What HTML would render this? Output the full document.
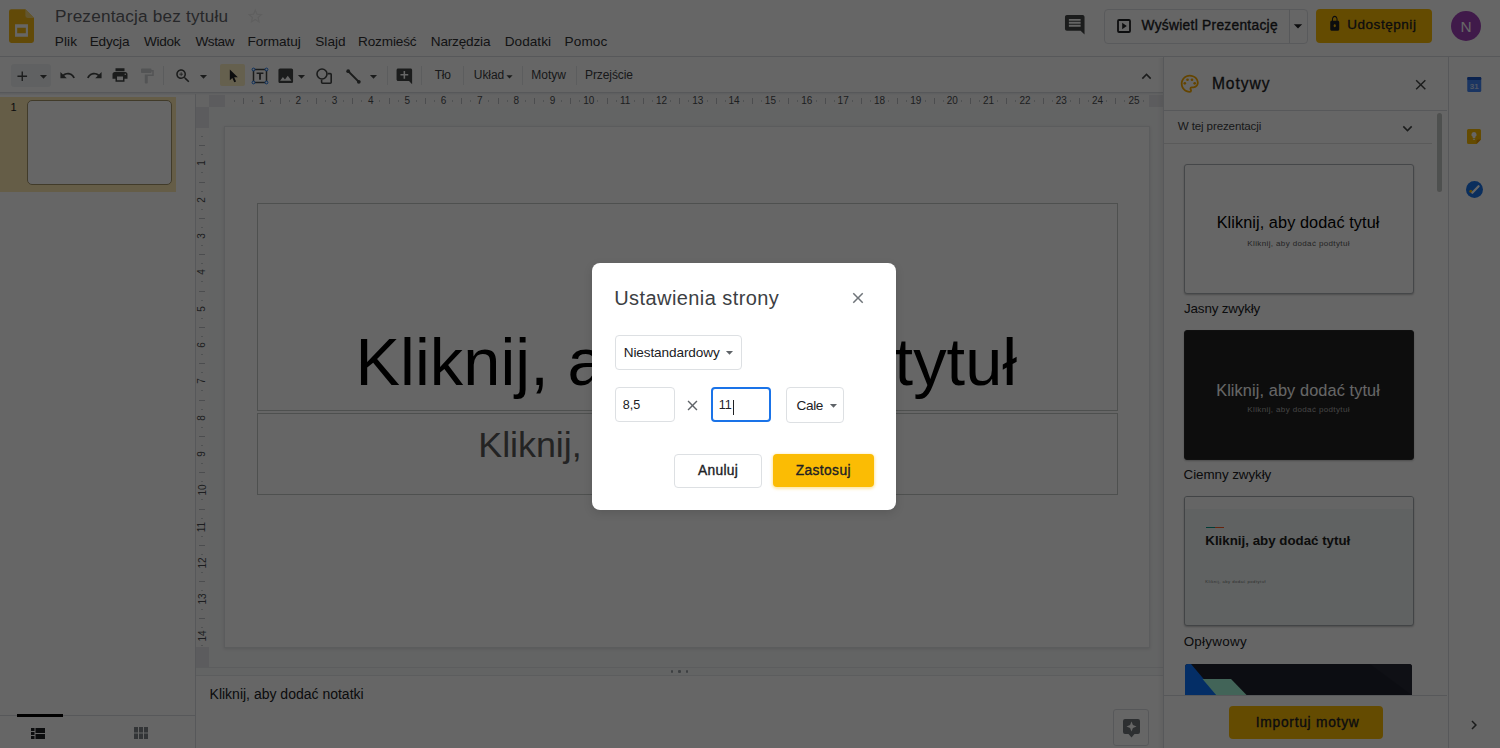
<!DOCTYPE html>
<html lang="pl"><head><meta charset="utf-8"><title>Prezentacja bez tytułu</title>
<style>
html,body{margin:0;padding:0;}
body{width:1500px;height:748px;overflow:hidden;position:relative;background:#fff;font-family:"Liberation Sans",sans-serif;}
.a{position:absolute;box-sizing:content-box;}
.t{position:absolute;white-space:nowrap;}
#page{position:absolute;left:0;top:0;width:1500px;height:748px;overflow:hidden;background:#fff;}
#dim{position:absolute;left:0;top:0;width:1500px;height:748px;background:rgba(0,0,0,.6);}
</style></head><body>
<div id="page"><svg class="a" style="left:9.300px;top:9px" width="25" height="34.200" viewBox="0 0 26 35"><path d="M2.4 0H17l9 9v23.6A2.4 2.4 0 0 1 23.600 35H2.4A2.400 2.400 0 0 1 0 32.600V2.400A2.400 2.400 0 0 1 2.400 0z" fill="#f5ba15"/><path d="M17 0l9 9h-6.600A2.400 2.400 0 0 1 17 6.600z" fill="#f8d775"/><path d="M6.300 15.500h13.400v13.200h-13.400zM8.500 19.300v5.600h9v-5.600z" fill="#fff" fill-rule="evenodd"/></svg><span class="t " style="left:55.09px;top:8px;font-size:17.2px;line-height:17.2px;color:#5f6368;letter-spacing:0.182px;">Prezentacja bez tytułu</span><svg class="a" style="left:246.25px;top:6.75px;" width="18.5" height="18.5" viewBox="0 0 24 24" fill="#ededed"><path d="M22 9.24l-7.19-.62L12 2 9.19 8.63 2 9.24l5.46 4.73L5.82 21 12 17.27 18.18 21l-1.63-7.03L22 9.24zM12 15.4l-3.76 2.27 1-4.28-3.32-2.88 4.38-.38L12 6.1l1.71 4.04 4.38.38-3.32 2.88 1 4.28L12 15.4z"/></svg><span class="t " style="left:54.68px;top:35px;font-size:13.6px;line-height:13.6px;color:#303134;letter-spacing:0.160px;">Plik</span><span class="t " style="left:89.78px;top:35px;font-size:13.6px;line-height:13.6px;color:#303134;letter-spacing:-0.221px;">Edycja</span><span class="t " style="left:144.04px;top:35px;font-size:13.6px;line-height:13.6px;color:#303134;letter-spacing:-0.336px;">Widok</span><span class="t " style="left:195.44px;top:35px;font-size:13.6px;line-height:13.6px;color:#303134;letter-spacing:-0.443px;">Wstaw</span><span class="t " style="left:247.58px;top:35px;font-size:13.6px;line-height:13.6px;color:#303134;letter-spacing:-0.061px;">Formatuj</span><span class="t " style="left:315.28px;top:35px;font-size:13.6px;line-height:13.6px;color:#303134;letter-spacing:0.013px;">Slajd</span><span class="t " style="left:357.98px;top:35px;font-size:13.6px;line-height:13.6px;color:#303134;letter-spacing:-0.147px;">Rozmieść</span><span class="t " style="left:430.78px;top:35px;font-size:13.6px;line-height:13.6px;color:#303134;letter-spacing:-0.189px;">Narzędzia</span><span class="t " style="left:504.78px;top:35px;font-size:13.6px;line-height:13.6px;color:#303134;letter-spacing:0.020px;">Dodatki</span><span class="t " style="left:564.58px;top:35px;font-size:13.6px;line-height:13.6px;color:#303134;letter-spacing:0.086px;">Pomoc</span><svg class="a" style="left:1062.95px;top:13.45px;" width="23.5" height="23.5" viewBox="0 0 24 24" fill="#444746"><path d="M21.99 4c0-1.1-.89-2-1.99-2H4c-1.1 0-2 .9-2 2v12c0 1.1.9 2 2 2h14l4 4-.01-18zM18 14H6v-2h12v2zm0-3H6V9h12v2zm0-3H6V6h12v2z"/></svg><div class="a" style="left:1104px;top:9px;width:202px;height:32.5px;border:1px solid #dfe1e5;border-radius:4px;"></div><div class="a" style="left:1288.5px;top:9px;width:1px;height:34px;background:#dadce0;"></div><svg class="a" style="left:1116.500px;top:18.500px" width="14" height="14" viewBox="0 0 14 14"><rect x="1" y="1" width="12" height="12" rx="1" fill="none" stroke="#202124" stroke-width="1.800"/><path d="M5.200 3.800v6.400l4.600-3.200z" fill="#202124"/></svg><span class="t " style="left:1141.54px;top:19px;font-size:13.8px;line-height:13.8px;color:#202124;letter-spacing:0.266px;-webkit-text-stroke:.35px #202124;">Wyświetl Prezentację</span><svg class="a" style="left:1287.60px;top:15.50px;" width="20" height="20" viewBox="0 0 24 24" fill="#202124"><path d="M7 10l5 5 5-5z"/></svg><div class="a" style="left:1315.5px;top:9px;width:116.5px;height:34px;background:#fbbc04;border-radius:4px;"></div><svg class="a" style="left:1327.500px;top:15px" width="13.500" height="17.200" viewBox="0 0 24 24" preserveAspectRatio="none" fill="#202124"><path d="M18 8h-1V6c0-2.76-2.24-5-5-5S7 3.24 7 6v2H6c-1.1 0-2 .9-2 2v10c0 1.1.9 2 2 2h12c1.1 0 2-.9 2-2V10c0-1.1-.9-2-2-2zm-6 9c-1.1 0-2-.9-2-2s.9-2 2-2 2 .9 2 2-.9 2-2 2zm3.1-9H8.9V6c0-1.71 1.39-3.1 3.1-3.1 1.71 0 3.1 1.39 3.1 3.1v2z"/></svg><span class="t " style="left:1347.16px;top:18px;font-size:13.5px;line-height:13.5px;color:#202124;letter-spacing:0.551px;-webkit-text-stroke:.3px #202124;">Udostępnij</span><div class="a" style="left:1451px;top:10.7px;width:30px;height:30px;background:#a142b8;border-radius:50%;"></div><span class="t " style="left:1460.44px;top:19px;font-size:15.4px;line-height:15.4px;color:#fff;">N</span><div class="a" style="left:0px;top:56px;width:1500px;height:1px;background:#dadce0;"></div><div class="a" style="left:11px;top:63.5px;width:39.5px;height:23px;background:#f1f3f4;border-radius:3px;"></div><svg class="a" style="left:14.45px;top:67.65px;" width="16.5" height="16.5" viewBox="0 0 24 24" fill="#444746"><path d="M19 13h-6v6h-2v-6H5v-2h6V5h2v6h6v2z"/></svg><svg class="a" style="left:35.10px;top:67.50px;" width="17" height="17" viewBox="0 0 24 24" fill="#444746"><path d="M7 10l5 5 5-5z"/></svg><svg class="a" style="left:58.50px;top:67.00px;" width="17" height="17" viewBox="0 0 24 24" fill="#444746"><path d="M12.5 8c-2.65 0-5.05.99-6.9 2.6L2 7v9h9l-3.62-3.62c1.39-1.16 3.16-1.88 5.12-1.88 3.54 0 6.55 2.31 7.6 5.5l2.37-.78C21.08 11.03 17.15 8 12.5 8z"/></svg><svg class="a" style="left:85.50px;top:67.00px;" width="17" height="17" viewBox="0 0 24 24" fill="#444746"><path d="M18.4 10.6C16.55 8.99 14.15 8 11.5 8c-4.65 0-8.58 3.03-9.96 7.22L3.9 16c1.05-3.19 4.05-5.5 7.6-5.5 1.95 0 3.73.72 5.12 1.88L13 16h9V7l-3.6 3.6z"/></svg><svg class="a" style="left:111.10px;top:66.30px;" width="18" height="18" viewBox="0 0 24 24" fill="#444746"><path d="M19 8H5c-1.66 0-3 1.34-3 3v6h4v4h12v-4h4v-6c0-1.66-1.34-3-3-3zm-3 11H8v-5h8v5zm3-7c-.55 0-1-.45-1-1s.45-1 1-1 1 .45 1 1-.45 1-1 1zm-1-9H6v4h12V3z"/></svg><svg class="a" style="left:138.00px;top:66.50px;" width="18" height="18" viewBox="0 0 24 24" fill="#cfd1d4"><path d="M18 4V3c0-.55-.45-1-1-1H5c-.55 0-1 .45-1 1v4c0 .55.45 1 1 1h12c.55 0 1-.45 1-1V6h1v4H9v11c0 .55.45 1 1 1h2c.55 0 1-.45 1-1v-9h8V4h-3z"/></svg><div class="a" style="left:163px;top:66px;width:1px;height:19px;background:#e4e6e9;"></div><svg class="a" style="left:173.50px;top:67.30px;" width="18" height="18" viewBox="0 0 24 24" fill="#444746"><path d="M15.5 14h-.79l-.28-.27C15.41 12.59 16 11.11 16 9.5 16 5.91 13.09 3 9.5 3S3 5.91 3 9.5 5.91 16 9.5 16c1.61 0 3.09-.59 4.23-1.57l.27.28v.79l5 4.99L20.49 19l-4.99-5zm-6 0C7.01 14 5 11.99 5 9.5S7.01 5 9.5 5 14 7.01 14 9.5 11.99 14 9.5 14zM12 10h-2v2H9v-2H7V9h2V7h1v2h2v1z"/></svg><svg class="a" style="left:195.00px;top:67.50px;" width="17" height="17" viewBox="0 0 24 24" fill="#444746"><path d="M7 10l5 5 5-5z"/></svg><div class="a" style="left:220px;top:63.5px;width:25px;height:22.5px;background:#fdefc3;border-radius:2px;"></div><svg class="a" style="left:228.5px;top:68.800px" width="9.900" height="14" viewBox="0 0 12 17"><path d="M1 0.500v13.300l3.100-3 2.300 5.400 2.200-.9-2.300-5.300h4.400z" fill="#202124"/></svg><svg class="a" style="left:251px;top:67px" width="18" height="18" viewBox="0 0 18 18"><path d="M2.500 2.500h13v13h-13z" fill="none" stroke="#444746" stroke-width="1.500"/><path d="M5.600 5.400h6.800v1.700h-2.500v5.700h-1.800v-5.700h-2.500z" fill="#444746"/><g fill="#fff" stroke="#1a73e8" stroke-width="1"><circle cx="2.500" cy="2.500" r="1.400"/><circle cx="15.500" cy="2.500" r="1.400"/><circle cx="2.500" cy="15.500" r="1.400"/><circle cx="15.500" cy="15.500" r="1.400"/></g></svg><svg class="a" style="left:275.85px;top:65.75px;" width="19.5" height="19.5" viewBox="0 0 24 24" fill="#444746"><path d="M21 19V5c0-1.1-.9-2-2-2H5c-1.1 0-2 .9-2 2v14c0 1.1.9 2 2 2h14c1.1 0 2-.9 2-2zM8.5 13.5l2.5 3.01L14.5 12l4.5 6H5l3.5-4.5z"/></svg><svg class="a" style="left:292.90px;top:67.50px;" width="17" height="17" viewBox="0 0 24 24" fill="#444746"><path d="M7 10l5 5 5-5z"/></svg><svg class="a" style="left:315.5px;top:67.500px" width="16" height="16" viewBox="0 0 16 16" fill="none" stroke="#444746" stroke-width="1.600"><circle cx="6" cy="6" r="5"/><path d="M11.800 5.600h2.400a1 1 0 0 1 1 1v7.600a1 1 0 0 1 -1 1h-7.600a1 1 0 0 1 -1 -1v-2.400"/></svg><svg class="a" style="left:345.5px;top:68.500px" width="15" height="15" viewBox="0 0 15 15"><path d="M2 2L13 13" stroke="#444746" stroke-width="1.800"/><circle cx="2.200" cy="2.200" r="1.900" fill="#444746"/><circle cx="12.800" cy="12.800" r="1.900" fill="#444746"/></svg><svg class="a" style="left:364.70px;top:67.50px;" width="17" height="17" viewBox="0 0 24 24" fill="#444746"><path d="M7 10l5 5 5-5z"/></svg><div class="a" style="left:386.5px;top:66px;width:1px;height:19px;background:#e6e8eb;"></div><svg class="a" style="left:394.95px;top:66.65px;" width="18.7" height="18.7" viewBox="0 0 24 24" fill="#444746"><path d="M21.99 4c0-1.1-.89-2-1.99-2H4c-1.1 0-2 .9-2 2v12c0 1.1.9 2 2 2h14l4 4-.01-18zM17 11h-4v4h-2v-4H7V9h4V5h2v4h4v2z"/></svg><div class="a" style="left:421px;top:66px;width:1px;height:19px;background:#e6e8eb;"></div><span class="t " style="left:434.63px;top:69px;font-size:12px;line-height:12px;color:#3c4043;letter-spacing:-0.149px;">Tło</span><div class="a" style="left:463px;top:66px;width:1px;height:19px;background:#e6e8eb;"></div><span class="t " style="left:473.77px;top:69px;font-size:12px;line-height:12px;color:#3c4043;letter-spacing:-0.045px;">Układ</span><svg class="a" style="left:501.80px;top:68.50px;" width="15" height="15" viewBox="0 0 24 24" fill="#444746"><path d="M7 10l5 5 5-5z"/></svg><div class="a" style="left:522px;top:66px;width:1px;height:19px;background:#e6e8eb;"></div><span class="t " style="left:531.32px;top:69px;font-size:12px;line-height:12px;color:#3c4043;letter-spacing:-0.029px;">Motyw</span><div class="a" style="left:576px;top:66px;width:1px;height:19px;background:#e6e8eb;"></div><span class="t " style="left:585.02px;top:69px;font-size:12px;line-height:12px;color:#3c4043;letter-spacing:-0.095px;">Przejście</span><svg class="a" style="left:1137.20px;top:66.50px;" width="19" height="19" viewBox="0 0 24 24" fill="#444746"><path d="M12 8l-6 6 1.41 1.41L12 10.83l4.59 4.58L18 14z"/></svg><div class="a" style="left:0px;top:91.5px;width:1163px;height:1px;background:#dadce0;"></div><div class="a" style="left:0px;top:92.5px;width:1163px;height:2px;background:linear-gradient(#e8eaed,#f8f9fa);"></div><div class="a" style="left:0px;top:94.5px;width:195px;height:620px;background:#fff;"></div><div class="a" style="left:0px;top:96.5px;width:176px;height:95px;background:#fce8b2;"></div><span class="t " style="left:10.39px;top:102px;font-size:11px;line-height:11px;color:#202124;">1</span><div class="a" style="left:27.2px;top:100.2px;width:142.6px;height:82.6px;border:1.500px solid #a3946a;border-radius:5px;background:#fff;"></div><div class="a" style="left:195px;top:94px;width:1px;height:654px;background:#dadce0;"></div><div class="a" style="left:0px;top:714.5px;width:195px;height:1px;background:#dadce0;"></div><div class="a" style="left:16.5px;top:714px;width:46px;height:2.5px;background:#000;"></div><svg class="a" style="left:31px;top:727.500px" width="14" height="11" viewBox="0 0 14 11" fill="#202124"><path d="M0 0h3.500v3h-3.500zM0 4h3.500v3h-3.500zM0 8h3.500v3h-3.500zM4.500 0h9.500v5h-9.500zM4.500 6h9.500v5h-9.500z"/></svg><svg class="a" style="left:134px;top:727px" width="14" height="12" viewBox="0 0 14 12" fill="#80868b"><path d="M0 0h4v5.500h-4zM5 0h4v5.500h-4zM10 0h4v5.500h-4zM0 6.500h4v5.500h-4zM5 6.500h4v5.500h-4zM10 6.500h4v5.500h-4z"/></svg><div class="a" style="left:196px;top:94.5px;width:967px;height:572.5px;background:#f8f9fa;"></div><div class="a" style="left:196px;top:94.5px;width:967px;height:12px;background:#fbfbfb;"></div><div class="a" style="left:196px;top:94.5px;width:12.5px;height:572.5px;background:#fbfbfb;"></div><div class="a" style="left:208.5px;top:94.5px;width:16.5px;height:12px;background:#e6e6ea;"></div><div class="a" style="left:1148.5px;top:94.5px;width:14.5px;height:12px;background:#e6e6ea;"></div><div class="a" style="left:196px;top:106.5px;width:12.5px;height:21px;background:#e6e6ea;"></div><div class="a" style="left:196px;top:647px;width:12.5px;height:20px;background:#e6e6ea;"></div><span class="t " style="left:258.92px;top:96px;font-size:10px;line-height:10px;color:#4a4d50;">1</span><span class="t " style="left:295.40px;top:96px;font-size:10px;line-height:10px;color:#4a4d50;">2</span><span class="t " style="left:331.77px;top:96px;font-size:10px;line-height:10px;color:#4a4d50;">3</span><span class="t " style="left:368.11px;top:96px;font-size:10px;line-height:10px;color:#4a4d50;">4</span><span class="t " style="left:404.43px;top:96px;font-size:10px;line-height:10px;color:#4a4d50;">5</span><span class="t " style="left:440.72px;top:96px;font-size:10px;line-height:10px;color:#4a4d50;">6</span><span class="t " style="left:477.09px;top:96px;font-size:10px;line-height:10px;color:#4a4d50;">7</span><span class="t " style="left:513.44px;top:96px;font-size:10px;line-height:10px;color:#4a4d50;">8</span><span class="t " style="left:549.78px;top:96px;font-size:10px;line-height:10px;color:#4a4d50;">9</span><span class="t " style="left:583.15px;top:96px;font-size:10px;line-height:10px;color:#4a4d50;">10</span><span class="t " style="left:619.91px;top:96px;font-size:10px;line-height:10px;color:#4a4d50;">11</span><span class="t " style="left:655.89px;top:96px;font-size:10px;line-height:10px;color:#4a4d50;">12</span><span class="t " style="left:692.20px;top:96px;font-size:10px;line-height:10px;color:#4a4d50;">13</span><span class="t " style="left:728.46px;top:96px;font-size:10px;line-height:10px;color:#4a4d50;">14</span><span class="t " style="left:764.87px;top:96px;font-size:10px;line-height:10px;color:#4a4d50;">15</span><span class="t " style="left:801.22px;top:96px;font-size:10px;line-height:10px;color:#4a4d50;">16</span><span class="t " style="left:837.59px;top:96px;font-size:10px;line-height:10px;color:#4a4d50;">17</span><span class="t " style="left:873.89px;top:96px;font-size:10px;line-height:10px;color:#4a4d50;">18</span><span class="t " style="left:910.25px;top:96px;font-size:10px;line-height:10px;color:#4a4d50;">19</span><span class="t " style="left:946.68px;top:96px;font-size:10px;line-height:10px;color:#4a4d50;">20</span><span class="t " style="left:983.07px;top:96px;font-size:10px;line-height:10px;color:#4a4d50;">21</span><span class="t " style="left:1019.42px;top:96px;font-size:10px;line-height:10px;color:#4a4d50;">22</span><span class="t " style="left:1055.73px;top:96px;font-size:10px;line-height:10px;color:#4a4d50;">23</span><span class="t " style="left:1091.99px;top:96px;font-size:10px;line-height:10px;color:#4a4d50;">24</span><span class="t " style="left:1128.40px;top:96px;font-size:10px;line-height:10px;color:#4a4d50;">25</span><div class="a" style="left:242.5px;top:97.5px;width:1px;height:6px;background:#bdc1c6;"></div><div class="a" style="left:233.5px;top:99.5px;width:1px;height:2px;background:#c8ccd0;"></div><div class="a" style="left:251.5px;top:99.5px;width:1px;height:2px;background:#c8ccd0;"></div><div class="a" style="left:279.5px;top:97.5px;width:1px;height:6px;background:#bdc1c6;"></div><div class="a" style="left:269.5px;top:99.5px;width:1px;height:2px;background:#c8ccd0;"></div><div class="a" style="left:288.5px;top:99.5px;width:1px;height:2px;background:#c8ccd0;"></div><div class="a" style="left:315.5px;top:97.5px;width:1px;height:6px;background:#bdc1c6;"></div><div class="a" style="left:306.5px;top:99.5px;width:1px;height:2px;background:#c8ccd0;"></div><div class="a" style="left:324.5px;top:99.5px;width:1px;height:2px;background:#c8ccd0;"></div><div class="a" style="left:351.5px;top:97.5px;width:1px;height:6px;background:#bdc1c6;"></div><div class="a" style="left:342.5px;top:99.5px;width:1px;height:2px;background:#c8ccd0;"></div><div class="a" style="left:360.5px;top:99.5px;width:1px;height:2px;background:#c8ccd0;"></div><div class="a" style="left:388.5px;top:97.5px;width:1px;height:6px;background:#bdc1c6;"></div><div class="a" style="left:378.5px;top:99.5px;width:1px;height:2px;background:#c8ccd0;"></div><div class="a" style="left:397.5px;top:99.5px;width:1px;height:2px;background:#c8ccd0;"></div><div class="a" style="left:424.5px;top:97.5px;width:1px;height:6px;background:#bdc1c6;"></div><div class="a" style="left:415.5px;top:99.5px;width:1px;height:2px;background:#c8ccd0;"></div><div class="a" style="left:433.5px;top:99.5px;width:1px;height:2px;background:#c8ccd0;"></div><div class="a" style="left:460.5px;top:97.5px;width:1px;height:6px;background:#bdc1c6;"></div><div class="a" style="left:451.5px;top:99.5px;width:1px;height:2px;background:#c8ccd0;"></div><div class="a" style="left:469.5px;top:99.5px;width:1px;height:2px;background:#c8ccd0;"></div><div class="a" style="left:497.5px;top:97.5px;width:1px;height:6px;background:#bdc1c6;"></div><div class="a" style="left:487.5px;top:99.5px;width:1px;height:2px;background:#c8ccd0;"></div><div class="a" style="left:506.5px;top:99.5px;width:1px;height:2px;background:#c8ccd0;"></div><div class="a" style="left:533.5px;top:97.5px;width:1px;height:6px;background:#bdc1c6;"></div><div class="a" style="left:524.5px;top:99.5px;width:1px;height:2px;background:#c8ccd0;"></div><div class="a" style="left:542.5px;top:99.5px;width:1px;height:2px;background:#c8ccd0;"></div><div class="a" style="left:569.5px;top:97.5px;width:1px;height:6px;background:#bdc1c6;"></div><div class="a" style="left:560.5px;top:99.5px;width:1px;height:2px;background:#c8ccd0;"></div><div class="a" style="left:578.5px;top:99.5px;width:1px;height:2px;background:#c8ccd0;"></div><div class="a" style="left:606.5px;top:97.5px;width:1px;height:6px;background:#bdc1c6;"></div><div class="a" style="left:596.5px;top:99.5px;width:1px;height:2px;background:#c8ccd0;"></div><div class="a" style="left:615.5px;top:99.5px;width:1px;height:2px;background:#c8ccd0;"></div><div class="a" style="left:642.5px;top:97.5px;width:1px;height:6px;background:#bdc1c6;"></div><div class="a" style="left:633.5px;top:99.5px;width:1px;height:2px;background:#c8ccd0;"></div><div class="a" style="left:651.5px;top:99.5px;width:1px;height:2px;background:#c8ccd0;"></div><div class="a" style="left:678.5px;top:97.5px;width:1px;height:6px;background:#bdc1c6;"></div><div class="a" style="left:669.5px;top:99.5px;width:1px;height:2px;background:#c8ccd0;"></div><div class="a" style="left:687.5px;top:99.5px;width:1px;height:2px;background:#c8ccd0;"></div><div class="a" style="left:715.5px;top:97.5px;width:1px;height:6px;background:#bdc1c6;"></div><div class="a" style="left:706.5px;top:99.5px;width:1px;height:2px;background:#c8ccd0;"></div><div class="a" style="left:724.5px;top:99.5px;width:1px;height:2px;background:#c8ccd0;"></div><div class="a" style="left:751.5px;top:97.5px;width:1px;height:6px;background:#bdc1c6;"></div><div class="a" style="left:742.5px;top:99.5px;width:1px;height:2px;background:#c8ccd0;"></div><div class="a" style="left:760.5px;top:99.5px;width:1px;height:2px;background:#c8ccd0;"></div><div class="a" style="left:787.5px;top:97.5px;width:1px;height:6px;background:#bdc1c6;"></div><div class="a" style="left:778.5px;top:99.5px;width:1px;height:2px;background:#c8ccd0;"></div><div class="a" style="left:796.5px;top:99.5px;width:1px;height:2px;background:#c8ccd0;"></div><div class="a" style="left:824.5px;top:97.5px;width:1px;height:6px;background:#bdc1c6;"></div><div class="a" style="left:815.5px;top:99.5px;width:1px;height:2px;background:#c8ccd0;"></div><div class="a" style="left:833.5px;top:99.5px;width:1px;height:2px;background:#c8ccd0;"></div><div class="a" style="left:860.5px;top:97.5px;width:1px;height:6px;background:#bdc1c6;"></div><div class="a" style="left:851.5px;top:99.5px;width:1px;height:2px;background:#c8ccd0;"></div><div class="a" style="left:869.5px;top:99.5px;width:1px;height:2px;background:#c8ccd0;"></div><div class="a" style="left:896.5px;top:97.5px;width:1px;height:6px;background:#bdc1c6;"></div><div class="a" style="left:887.5px;top:99.5px;width:1px;height:2px;background:#c8ccd0;"></div><div class="a" style="left:905.5px;top:99.5px;width:1px;height:2px;background:#c8ccd0;"></div><div class="a" style="left:933.5px;top:97.5px;width:1px;height:6px;background:#bdc1c6;"></div><div class="a" style="left:924.5px;top:99.5px;width:1px;height:2px;background:#c8ccd0;"></div><div class="a" style="left:942.5px;top:99.5px;width:1px;height:2px;background:#c8ccd0;"></div><div class="a" style="left:969.5px;top:97.5px;width:1px;height:6px;background:#bdc1c6;"></div><div class="a" style="left:960.5px;top:99.5px;width:1px;height:2px;background:#c8ccd0;"></div><div class="a" style="left:978.5px;top:99.5px;width:1px;height:2px;background:#c8ccd0;"></div><div class="a" style="left:1005.5px;top:97.5px;width:1px;height:6px;background:#bdc1c6;"></div><div class="a" style="left:996.5px;top:99.5px;width:1px;height:2px;background:#c8ccd0;"></div><div class="a" style="left:1014.5px;top:99.5px;width:1px;height:2px;background:#c8ccd0;"></div><div class="a" style="left:1042.5px;top:97.5px;width:1px;height:6px;background:#bdc1c6;"></div><div class="a" style="left:1033.5px;top:99.5px;width:1px;height:2px;background:#c8ccd0;"></div><div class="a" style="left:1051.5px;top:99.5px;width:1px;height:2px;background:#c8ccd0;"></div><div class="a" style="left:1078.5px;top:97.5px;width:1px;height:6px;background:#bdc1c6;"></div><div class="a" style="left:1069.5px;top:99.5px;width:1px;height:2px;background:#c8ccd0;"></div><div class="a" style="left:1087.5px;top:99.5px;width:1px;height:2px;background:#c8ccd0;"></div><div class="a" style="left:1114.5px;top:97.5px;width:1px;height:6px;background:#bdc1c6;"></div><div class="a" style="left:1105.5px;top:99.5px;width:1px;height:2px;background:#c8ccd0;"></div><div class="a" style="left:1123.5px;top:99.5px;width:1px;height:2px;background:#c8ccd0;"></div><div class="a" style="left:1142.5px;top:99.5px;width:1px;height:2px;background:#c8ccd0;"></div><span class="t" style="left:199.42px;top:158.34px;font-size:10px;line-height:10px;color:#4a4d50;transform:rotate(-90deg);transform-origin:50% 50%;">1</span><span class="t" style="left:199.42px;top:194.68px;font-size:10px;line-height:10px;color:#4a4d50;transform:rotate(-90deg);transform-origin:50% 50%;">2</span><span class="t" style="left:199.42px;top:231.02px;font-size:10px;line-height:10px;color:#4a4d50;transform:rotate(-90deg);transform-origin:50% 50%;">3</span><span class="t" style="left:199.42px;top:267.36px;font-size:10px;line-height:10px;color:#4a4d50;transform:rotate(-90deg);transform-origin:50% 50%;">4</span><span class="t" style="left:199.42px;top:303.70px;font-size:10px;line-height:10px;color:#4a4d50;transform:rotate(-90deg);transform-origin:50% 50%;">5</span><span class="t" style="left:199.42px;top:340.04px;font-size:10px;line-height:10px;color:#4a4d50;transform:rotate(-90deg);transform-origin:50% 50%;">6</span><span class="t" style="left:199.42px;top:376.38px;font-size:10px;line-height:10px;color:#4a4d50;transform:rotate(-90deg);transform-origin:50% 50%;">7</span><span class="t" style="left:199.42px;top:412.72px;font-size:10px;line-height:10px;color:#4a4d50;transform:rotate(-90deg);transform-origin:50% 50%;">8</span><span class="t" style="left:199.42px;top:449.06px;font-size:10px;line-height:10px;color:#4a4d50;transform:rotate(-90deg);transform-origin:50% 50%;">9</span><span class="t" style="left:196.64px;top:485.40px;font-size:10px;line-height:10px;color:#4a4d50;transform:rotate(-90deg);transform-origin:50% 50%;">10</span><span class="t" style="left:197.01px;top:521.74px;font-size:10px;line-height:10px;color:#4a4d50;transform:rotate(-90deg);transform-origin:50% 50%;">11</span><span class="t" style="left:196.64px;top:558.08px;font-size:10px;line-height:10px;color:#4a4d50;transform:rotate(-90deg);transform-origin:50% 50%;">12</span><span class="t" style="left:196.64px;top:594.42px;font-size:10px;line-height:10px;color:#4a4d50;transform:rotate(-90deg);transform-origin:50% 50%;">13</span><span class="t" style="left:196.64px;top:630.76px;font-size:10px;line-height:10px;color:#4a4d50;transform:rotate(-90deg);transform-origin:50% 50%;">14</span><div class="a" style="left:199px;top:144.5px;width:6px;height:1px;background:#bdc1c6;"></div><div class="a" style="left:201px;top:135.5px;width:2px;height:1px;background:#c8ccd0;"></div><div class="a" style="left:201px;top:153.5px;width:2px;height:1px;background:#c8ccd0;"></div><div class="a" style="left:199px;top:181.5px;width:6px;height:1px;background:#bdc1c6;"></div><div class="a" style="left:201px;top:171.5px;width:2px;height:1px;background:#c8ccd0;"></div><div class="a" style="left:201px;top:190.5px;width:2px;height:1px;background:#c8ccd0;"></div><div class="a" style="left:199px;top:217.5px;width:6px;height:1px;background:#bdc1c6;"></div><div class="a" style="left:201px;top:208.5px;width:2px;height:1px;background:#c8ccd0;"></div><div class="a" style="left:201px;top:226.5px;width:2px;height:1px;background:#c8ccd0;"></div><div class="a" style="left:199px;top:253.5px;width:6px;height:1px;background:#bdc1c6;"></div><div class="a" style="left:201px;top:244.5px;width:2px;height:1px;background:#c8ccd0;"></div><div class="a" style="left:201px;top:262.5px;width:2px;height:1px;background:#c8ccd0;"></div><div class="a" style="left:199px;top:290.5px;width:6px;height:1px;background:#bdc1c6;"></div><div class="a" style="left:201px;top:280.5px;width:2px;height:1px;background:#c8ccd0;"></div><div class="a" style="left:201px;top:299.5px;width:2px;height:1px;background:#c8ccd0;"></div><div class="a" style="left:199px;top:326.5px;width:6px;height:1px;background:#bdc1c6;"></div><div class="a" style="left:201px;top:317.5px;width:2px;height:1px;background:#c8ccd0;"></div><div class="a" style="left:201px;top:335.5px;width:2px;height:1px;background:#c8ccd0;"></div><div class="a" style="left:199px;top:362.5px;width:6px;height:1px;background:#bdc1c6;"></div><div class="a" style="left:201px;top:353.5px;width:2px;height:1px;background:#c8ccd0;"></div><div class="a" style="left:201px;top:371.5px;width:2px;height:1px;background:#c8ccd0;"></div><div class="a" style="left:199px;top:399.5px;width:6px;height:1px;background:#bdc1c6;"></div><div class="a" style="left:201px;top:389.5px;width:2px;height:1px;background:#c8ccd0;"></div><div class="a" style="left:201px;top:408.5px;width:2px;height:1px;background:#c8ccd0;"></div><div class="a" style="left:199px;top:435.5px;width:6px;height:1px;background:#bdc1c6;"></div><div class="a" style="left:201px;top:426.5px;width:2px;height:1px;background:#c8ccd0;"></div><div class="a" style="left:201px;top:444.5px;width:2px;height:1px;background:#c8ccd0;"></div><div class="a" style="left:199px;top:471.5px;width:6px;height:1px;background:#bdc1c6;"></div><div class="a" style="left:201px;top:462.5px;width:2px;height:1px;background:#c8ccd0;"></div><div class="a" style="left:201px;top:480.5px;width:2px;height:1px;background:#c8ccd0;"></div><div class="a" style="left:199px;top:508.5px;width:6px;height:1px;background:#bdc1c6;"></div><div class="a" style="left:201px;top:498.5px;width:2px;height:1px;background:#c8ccd0;"></div><div class="a" style="left:201px;top:517.5px;width:2px;height:1px;background:#c8ccd0;"></div><div class="a" style="left:199px;top:544.5px;width:6px;height:1px;background:#bdc1c6;"></div><div class="a" style="left:201px;top:535.5px;width:2px;height:1px;background:#c8ccd0;"></div><div class="a" style="left:201px;top:553.5px;width:2px;height:1px;background:#c8ccd0;"></div><div class="a" style="left:199px;top:580.5px;width:6px;height:1px;background:#bdc1c6;"></div><div class="a" style="left:201px;top:571.5px;width:2px;height:1px;background:#c8ccd0;"></div><div class="a" style="left:201px;top:589.5px;width:2px;height:1px;background:#c8ccd0;"></div><div class="a" style="left:199px;top:617.5px;width:6px;height:1px;background:#bdc1c6;"></div><div class="a" style="left:201px;top:608.5px;width:2px;height:1px;background:#c8ccd0;"></div><div class="a" style="left:201px;top:626.5px;width:2px;height:1px;background:#c8ccd0;"></div><div class="a" style="left:201px;top:644.5px;width:2px;height:1px;background:#c8ccd0;"></div><div class="a" style="left:225px;top:127px;width:923.5px;height:520px;background:#fff;box-shadow:0 0 0 1px #e3e5e8,0 1px 3px 1px rgba(60,64,67,.15);"></div><div class="a" style="left:257px;top:202.5px;width:859px;height:206.5px;border:1px solid #c4c7c5;"></div><div class="a" style="left:257px;top:413px;width:859px;height:80px;border:1px solid #c4c7c5;"></div><span class="t " style="left:355.43px;top:329px;font-size:66.7px;line-height:66.7px;color:#000;letter-spacing:0.085px;">Kliknij, aby dodać tytuł</span><span class="t " style="left:478.26px;top:428px;font-size:35.9px;line-height:35.9px;color:#595959;letter-spacing:-0.036px;">Kliknij, aby dodać podtytuł</span><div class="a" style="left:196px;top:667px;width:967px;height:8px;background:#f8f9fa;"></div><div class="a" style="left:196px;top:666.5px;width:967px;height:1px;background:#e6e8eb;"></div><div class="a" style="left:196px;top:675px;width:967px;height:1px;background:#e6e8eb;"></div><div class="a" style="left:670.7px;top:670px;width:2.6px;height:2.6px;background:#9aa0a6;border-radius:1px;"></div><div class="a" style="left:678.3000000000001px;top:670px;width:2.6px;height:2.6px;background:#9aa0a6;border-radius:1px;"></div><div class="a" style="left:685.9000000000001px;top:670px;width:2.6px;height:2.6px;background:#9aa0a6;border-radius:1px;"></div><div class="a" style="left:196px;top:676px;width:967px;height:72px;background:#fff;"></div><span class="t " style="left:209.55px;top:687px;font-size:14px;line-height:14px;color:#202124;">Kliknij, aby dodać notatki</span><div class="a" style="left:1112.5px;top:709px;width:34.5px;height:34.5px;border:1px solid #dadce0;border-radius:3px;background:#fff;"></div><svg class="a" style="left:1122.500px;top:718.500px" width="17" height="19" viewBox="0 0 17 19"><path d="M2 0h13a2 2 0 0 1 2 2v11a2 2 0 0 1 -2 2h-3.500l-3 3.500-3-3.500H2a2 2 0 0 1 -2 -2V2a2 2 0 0 1 2 -2z" fill="#72777c"/><path d="M8.500 2.500l1.400 3.600 3.600 1.400-3.600 1.400-1.400 3.600-1.400-3.600-3.600-1.400 3.600-1.400z" fill="#fff"/></svg><div class="a" style="left:1157px;top:57.5px;width:7px;height:690.5px;background:linear-gradient(90deg,rgba(0,0,0,0),rgba(0,0,0,.06));"></div><div class="a" style="left:1163.5px;top:57.5px;width:284px;height:690.5px;background:#fff;"></div><div class="a" style="left:1163px;top:56.5px;width:1px;height:691.5px;background:#dadce0;"></div><svg class="a" style="left:1179.25px;top:73.25px;" width="21.5" height="21.5" viewBox="0 0 24 24" fill="#5f6368"><path d="M12 22C6.49 22 2 17.51 2 12S6.49 2 12 2s10 4.04 10 9c0 3.31-2.69 6-6 6h-1.77c-.28 0-.5.22-.5.5 0 .12.05.23.13.33.41.47.64 1.06.64 1.67A2.5 2.5 0 0 1 12 22zm0-18c-4.41 0-8 3.59-8 8s3.59 8 8 8c.28 0 .5-.22.5-.5a.54.54 0 0 0-.14-.35c-.41-.46-.63-1.05-.63-1.65a2.5 2.5 0 0 1 2.5-2.5H16c2.21 0 4-1.79 4-4 0-3.86-3.59-7-8-7z" fill="#f9ab00"/><g fill="#f9ab00"><circle cx="6.500" cy="11.500" r="1.500"/><circle cx="9.500" cy="7.500" r="1.500"/><circle cx="14.500" cy="7.500" r="1.500"/><circle cx="17.500" cy="11.500" r="1.500"/></g></svg><span class="t " style="left:1211.92px;top:76px;font-size:15.6px;line-height:15.6px;color:#202124;letter-spacing:0.968px;-webkit-text-stroke:.3px #202124;">Motywy</span><svg class="a" style="left:1412.05px;top:76.25px;" width="17.5" height="17.5" viewBox="0 0 24 24" fill="#444746"><path d="M19 6.41L17.59 5 12 10.59 6.41 5 5 6.41 10.59 12 5 17.59 6.41 19 12 13.41 17.59 19 19 17.59 13.41 12z"/></svg><div class="a" style="left:1164px;top:110px;width:283px;height:1px;background:#dadce0;"></div><span class="t " style="left:1177.85px;top:120px;font-size:11.6px;line-height:11.6px;color:#3c4043;letter-spacing:-0.144px;">W tej prezentacji</span><svg class="a" style="left:1397.50px;top:118.50px;" width="19" height="19" viewBox="0 0 24 24" fill="#444746"><path d="M16.59 8.59L12 13.17 7.41 8.59 6 10l6 6 6-6z"/></svg><div class="a" style="left:1164px;top:143px;width:268px;height:1px;background:#e0e0e0;"></div><div class="a" style="left:1436.5px;top:113px;width:5.5px;height:79px;background:#c4c7c5;border-radius:3px;"></div><div class="a" style="left:1184px;top:164px;width:227.5px;height:127.5px;border:1px solid #adb1b6;border-radius:3px;background:#fff;box-shadow:0 1px 2px rgba(0,0,0,.25);"></div><span class="t " style="left:1216.66px;top:214px;font-size:16.3px;line-height:16.3px;color:#000;letter-spacing:0.072px;">Kliknij, aby dodać tytuł</span><span class="t " style="left:1247.34px;top:240px;font-size:8px;line-height:8px;color:#595959;letter-spacing:0.373px;">Kliknij, aby dodać podtytuł</span><span class="t " style="left:1184.09px;top:302px;font-size:13.4px;line-height:13.4px;color:#202124;letter-spacing:-0.177px;">Jasny zwykły</span><div class="a" style="left:1184px;top:330px;width:227.5px;height:127.5px;border:1px solid #2a2a2a;border-radius:3px;background:#212121;box-shadow:0 1px 2px rgba(0,0,0,.25);"></div><span class="t " style="left:1216.16px;top:382px;font-size:16.3px;line-height:16.3px;color:#fff;letter-spacing:0.116px;">Kliknij, aby dodać tytuł</span><span class="t " style="left:1247.34px;top:406px;font-size:8px;line-height:8px;color:#adadad;letter-spacing:0.373px;">Kliknij, aby dodać podtytuł</span><span class="t " style="left:1183.62px;top:468px;font-size:13.4px;line-height:13.4px;color:#202124;letter-spacing:-0.074px;">Ciemny zwykły</span><div class="a" style="left:1184px;top:496px;width:227.5px;height:128px;border:1px solid #a6abb0;border-radius:3px;background:#eff5f4;box-shadow:0 1px 2px rgba(0,0,0,.25);overflow:hidden;"><div style="height:12px;background:#fcfcfc"></div></div><div class="a" style="left:1205.5px;top:526.5px;width:9px;height:1.5px;background:#009688;"></div><div class="a" style="left:1214.5px;top:526.5px;width:9px;height:1.5px;background:#ff5722;"></div><span class="t " style="left:1205.31px;top:534px;font-size:13.3px;line-height:13.3px;color:#212121;font-weight:700;letter-spacing:0.006px;">Kliknij, aby dodać tytuł</span><span class="t " style="left:1205.16px;top:580px;font-size:4.2px;line-height:4.2px;color:#757575;letter-spacing:0.454px;">Kliknij, aby dodać podtytuł</span><span class="t " style="left:1183.67px;top:635px;font-size:13.4px;line-height:13.4px;color:#202124;letter-spacing:0.272px;">Opływowy</span><div class="a" style="left:1184.5px;top:663.5px;width:227.5px;height:32px;background:#20222e;overflow:hidden;border-radius:3px 3px 0 0;"><svg width="228" height="32" viewBox="0 0 228 32"><path d="M0 0h6l27 32H0z" fill="#0a74ff"/><path d="M17.500 15h28.500l16.500 17H32z" fill="#a6fbdb"/><path d="M185 0h43v32z" fill="#262836"/></svg></div><div class="a" style="left:1164px;top:694.5px;width:283px;height:53.5px;background:#fff;"></div><div class="a" style="left:1164px;top:694.5px;width:283px;height:1px;background:#dadce0;"></div><div class="a" style="left:1228.5px;top:705.5px;width:154px;height:33.5px;background:#fbbc04;border-radius:4px;"></div><span class="t " style="left:1255.73px;top:716px;font-size:13.8px;line-height:13.8px;color:#202124;letter-spacing:0.729px;-webkit-text-stroke:.35px #202124;">Importuj motyw</span><div class="a" style="left:1447.5px;top:57.5px;width:52.5px;height:690.5px;background:#fff;"></div><div class="a" style="left:1447.5px;top:56.5px;width:1px;height:691.5px;background:#dadce0;"></div><svg class="a" style="left:1467px;top:76.500px" width="14.500" height="15" viewBox="0 0 14 15"><rect x="0" y="0" width="14" height="15" rx="1.500" fill="#4285f4"/><rect x="0" y="0" width="14" height="3" rx="1" fill="#1a56c4"/><text x="7" y="12" font-family="Liberation Sans, sans-serif" font-size="8" font-weight="700" fill="#c6d9fb" text-anchor="middle">31</text></svg><svg class="a" style="left:1467px;top:128.800px" width="14" height="15" viewBox="0 0 14 15"><path d="M1.500 0h11a1.500 1.500 0 0 1 1.500 1.500v9l-4.500 4.500h-8a1.500 1.500 0 0 1 -1.500 -1.500v-12a1.500 1.500 0 0 1 1.500 -1.500z" fill="#fbbc04"/><path d="M9.500 15v-3a1.500 1.500 0 0 1 1.500 -1.500h3z" fill="#e69500"/><path d="M7 3a2.600 2.600 0 0 0 -1.300 4.850v1.150h2.600v-1.150a2.600 2.600 0 0 0 -1.300 -4.850zM5.900 9.800h2.200v.9h-2.200z" fill="#fff"/></svg><svg class="a" style="left:1465.500px;top:181px" width="17" height="17" viewBox="0 0 17 17"><circle cx="8.500" cy="8.500" r="8.500" fill="#1a73e8"/><circle cx="4.800" cy="10.200" r="1.500" fill="#fbbc04"/><path d="M6.300 11.800l6.300-6.600" stroke="#fff" stroke-width="2.200" stroke-linecap="round"/></svg><svg class="a" style="left:1464.80px;top:716.00px;" width="18" height="18" viewBox="0 0 24 24" fill="#444746"><path d="M10 6L8.59 7.41 13.17 12l-4.58 4.59L10 18l6-6z"/></svg></div>
<div id="dim"></div>
<div id="modal"><div class="a" style="left:592px;top:263px;width:304px;height:247px;background:#fff;border-radius:8px;box-shadow:0 3px 10px rgba(0,0,0,.12);"></div><span class="t " style="left:614.26px;top:288px;font-size:20px;line-height:20px;color:#3c4043;letter-spacing:0.421px;">Ustawienia strony</span><svg class="a" style="left:849.00px;top:289.00px;" width="18" height="18" viewBox="0 0 24 24" fill="#6f7479"><path d="M19 6.41L17.59 5 12 10.59 6.41 5 5 6.41 10.59 12 5 17.59 6.41 19 12 13.41 17.59 19 19 17.59 13.41 12z"/></svg><div class="a" style="left:614.6px;top:335px;width:125.8px;height:33px;border:1px solid #dde0e3;border-radius:4px;"></div><span class="t " style="left:623.68px;top:346px;font-size:13.6px;line-height:13.6px;color:#202124;letter-spacing:-0.106px;">Niestandardowy</span><svg class="a" style="left:720.50px;top:343.50px;" width="17" height="17" viewBox="0 0 24 24" fill="#5f6368"><path d="M7 10l5 5 5-5z"/></svg><div class="a" style="left:614.6px;top:387.3px;width:58.6px;height:32.5px;border:1px solid #dde0e3;border-radius:4px;"></div><span class="t " style="left:622.65px;top:399px;font-size:12.6px;line-height:12.6px;color:#202124;">8,5</span><svg class="a" style="left:684.00px;top:396.50px;" width="17" height="17" viewBox="0 0 24 24" fill="#5f6368"><path d="M19 6.41L17.59 5 12 10.59 6.41 5 5 6.41 10.59 12 5 17.59 6.41 19 12 13.41 17.59 19 19 17.59 13.41 12z"/></svg><div class="a" style="left:710.5px;top:387.3px;width:56.2px;height:30.5px;border:2px solid #1a73e8;border-radius:4px;"></div><span class="t " style="left:718.64px;top:399px;font-size:12.6px;line-height:12.6px;color:#202124;">11</span><div class="a" style="left:733.2px;top:399.5px;width:1px;height:15px;background:#202124;"></div><div class="a" style="left:786.4px;top:387.3px;width:55.8px;height:34px;border:1px solid #dde0e3;border-radius:4px;"></div><span class="t " style="left:796.61px;top:399px;font-size:13.6px;line-height:13.6px;color:#202124;letter-spacing:-0.425px;">Cale</span><svg class="a" style="left:825.20px;top:396.50px;" width="17" height="17" viewBox="0 0 24 24" fill="#5f6368"><path d="M7 10l5 5 5-5z"/></svg><div class="a" style="left:674.4px;top:453.5px;width:85.2px;height:32.5px;border:1px solid #dde0e3;border-radius:4px;"></div><span class="t " style="left:697.97px;top:464px;font-size:13.8px;line-height:13.8px;color:#202124;letter-spacing:0.319px;-webkit-text-stroke:.35px #202124;">Anuluj</span><div class="a" style="left:772.5px;top:453.5px;width:101px;height:33.5px;background:#fbbc04;border-radius:4px;box-shadow:0 1px 3px 1px rgba(251,188,4,.35);"></div><span class="t " style="left:795.76px;top:464px;font-size:13.8px;line-height:13.8px;color:#202124;letter-spacing:0.373px;-webkit-text-stroke:.35px #202124;">Zastosuj</span></div>
</body></html>
